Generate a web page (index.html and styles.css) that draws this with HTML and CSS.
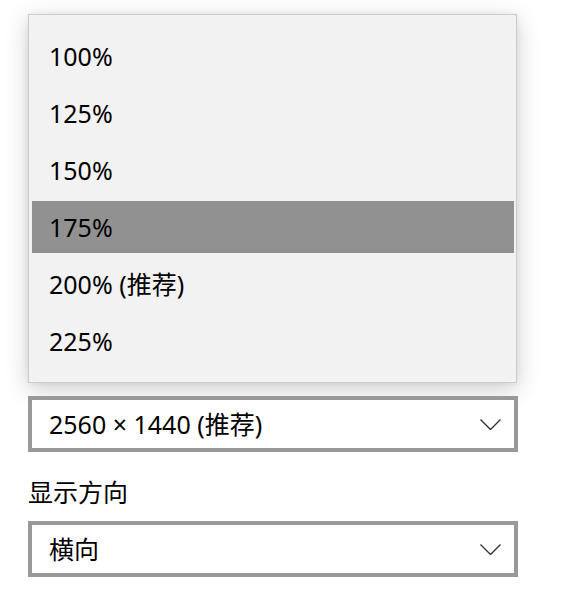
FILE: index.html
```html
<!DOCTYPE html>
<html lang="zh-CN">
<head>
<meta charset="utf-8">
<title>显示设置</title>
<link rel="stylesheet" href="styles.css">
</head>
<body>
<main class="page">
  <ul class="menu" role="listbox">
    <li class="menu-item">100%</li>
    <li class="menu-item">125%</li>
    <li class="menu-item">150%</li>
    <li class="menu-item is-selected">175%</li>
    <li class="menu-item">200% (推荐)</li>
    <li class="menu-item">225%</li>
  </ul>
  <div class="combo">
    <span class="combo-value">2560 × 1440 (推荐)</span>
    <svg class="chevron" width="21" height="11" viewBox="0 0 21 11"><polyline points="0.5,0.5 10.5,10.5 20.5,0.5" fill="none" stroke="#333" stroke-width="1.4"/></svg>
  </div>
  <div class="field-label">显示方向</div>
  <div class="combo">
    <span class="combo-value">横向</span>
    <svg class="chevron" width="21" height="11" viewBox="0 0 21 11"><polyline points="0.5,0.5 10.5,10.5 20.5,0.5" fill="none" stroke="#333" stroke-width="1.4"/></svg>
  </div>
</main>
</body>
</html>
```

FILE: styles.css
```css
html, body {
  margin: 0;
  padding: 0;
  background: #ffffff;
}

body {
  font-family: "Noto Sans", "Noto Sans CJK SC", sans-serif;
  font-size: 25px;
  color: #000000;
}

.page {
  width: 490px;
  padding: 0 0 0 28px;
}

.menu {
  list-style: none;
  box-sizing: border-box;
  width: 489px;
  margin: 14px 0 13px 0;
  padding: 15px 2px 15px 3px;
  background: #f2f2f2;
  border: 1px solid #cccccc;
  box-shadow: 0 6px 22px rgba(0, 0, 0, 0.2), 0 0 6px rgba(0, 0, 0, 0.06);
  display: flex;
  flex-direction: column;
  gap: 5px;
}

.menu-item {
  height: 52px;
  line-height: 52px;
  padding-left: 17px;
  white-space: nowrap;
}

.menu-item.is-selected {
  background: #919191;
}

.combo {
  box-sizing: border-box;
  height: 56px;
  border: 4px solid #999999;
  background: #ffffff;
  padding: 0 13px 0 17px;
  display: flex;
  align-items: center;
  justify-content: space-between;
}

.combo-value {
  line-height: 48px;
  white-space: nowrap;
}

.chevron {
  display: block;
  margin-top: 1px;
}

.field-label {
  margin: 22px 0 11px 0;
  line-height: 36px;
  height: 36px;
}
```
